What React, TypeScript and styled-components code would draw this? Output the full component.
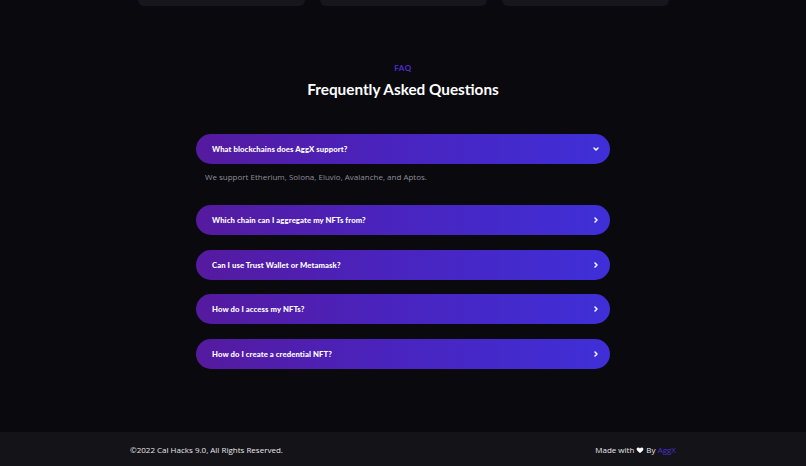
import React, { useState } from "react";
import styled, { createGlobalStyle } from "styled-components";

const Global = createGlobalStyle`
  html, body { margin: 0; padding: 0; background: #0a090e; }
  body { font-family: "Open Sans", "Liberation Sans", sans-serif; }
  * { box-sizing: border-box; }
`;

const Page = styled.div`
  width: 806px;
  height: 466px;
  display: flex;
  flex-direction: column;
  background: #0a090e;
  overflow: hidden;
`;

const CardRow = styled.div`
  display: flex;
  justify-content: center;
  gap: 15px;
`;

const CardStub = styled.div`
  width: 167px;
  height: 6px;
  background: #17161d;
  border-radius: 0 0 8px 8px;
`;

const Section = styled.section`
  flex: 1;
  display: flex;
  flex-direction: column;
  align-items: center;
  padding-top: 57px;
`;

const Eyebrow = styled.div`
  font-family: "Lato", sans-serif;
  font-weight: 700;
  font-size: 8px;
  letter-spacing: 0.6px;
  color: #4a2fd0;
  line-height: 10px;
`;

const Title = styled.h2`
  margin: 5px 0 0;
  font-family: "Lato", sans-serif;
  font-weight: 700;
  font-size: 15.3px;
  line-height: 22px;
  color: #ffffff;
`;

const List = styled.div`
  margin-top: 34px;
  width: 414px;
  display: flex;
  flex-direction: column;
  gap: 14.6px;
`;

const Item = styled.div`
  display: flex;
  flex-direction: column;
`;

const Question = styled.button`
  height: 30px;
  width: 100%;
  border: none;
  border-radius: 15px;
  padding: 0 10px 0 16px;
  display: flex;
  align-items: center;
  justify-content: space-between;
  background: linear-gradient(90deg, #551a9f 0%, #4a23bd 45%, #3f2fd8 100%);
  color: #ffffff;
  font-family: "Lato", sans-serif;
  font-weight: 900;
  font-size: 7.7px;
  letter-spacing: 0.1px;
  cursor: pointer;
  text-align: left;
`;

const Answer = styled.p`
  margin: 7px 0 7.4px 9px;
  font-family: "Open Sans", sans-serif;
  font-size: 8px;
  line-height: 12px;
  color: #8f8e96;
`;

const Footer = styled.footer`
  height: 34px;
  background: #141318;
  display: flex;
  justify-content: center;
`;

const FooterInner = styled.div`
  width: 546px;
  display: flex;
  align-items: center;
  justify-content: space-between;
  font-family: "Open Sans", sans-serif;
  font-size: 8px;
  color: #e6e6ea;
`;

const Brand = styled.span`
  color: #4a2fd0;
`;

const Heart = styled.svg`
  width: 8px;
  height: 8px;
  margin: 0 2px -1px;
`;

const Chevron = ({ open }: { open: boolean }) => (
  <svg width="8" height="8" viewBox="0 0 24 24" fill="none" stroke="#fff" strokeWidth="4.5" strokeLinecap="round" strokeLinejoin="round">
    {open ? <path d="M6 9l6 6 6-6" /> : <path d="M9 6l6 6-6 6" />}
  </svg>
);

const faqs = [
  { q: "What blockchains does AggX support?", a: "We support Etherium, Solona, Eluvio, Avalanche, and Aptos." },
  { q: "Which chain can I aggregate my NFTs from?", a: "" },
  { q: "Can I use Trust Wallet or Metamask?", a: "" },
  { q: "How do I access my NFTs?", a: "" },
  { q: "How do I create a credential NFT?", a: "" },
];

export default function App() {
  const [open, setOpen] = useState(0);
  return (
    <Page>
      <Global />
      <CardRow>
        <CardStub />
        <CardStub />
        <CardStub />
      </CardRow>
      <Section>
        <Eyebrow>FAQ</Eyebrow>
        <Title>Frequently Asked Questions</Title>
        <List>
          {faqs.map((f, i) => (
            <Item key={i}>
              <Question onClick={() => setOpen(open === i ? -1 : i)}>
                <span>{f.q}</span>
                <Chevron open={open === i} />
              </Question>
              {open === i && <Answer>{f.a}</Answer>}
            </Item>
          ))}
        </List>
      </Section>
      <Footer>
        <FooterInner>
          <span>©2022 Cal Hacks 9.0, All Rights Reserved.</span>
          <span>
            Made with
            <Heart viewBox="0 0 24 24">
              <path fill="#fff" d="M12 21s-7.5-4.6-9.6-9.1C.9 8.6 2.9 4.5 6.7 4.5c2.2 0 3.8 1.3 5.3 3.2 1.5-1.9 3.1-3.2 5.3-3.2 3.8 0 5.8 4.1 4.3 7.4C19.5 16.4 12 21 12 21z" />
            </Heart>
            By <Brand>AggX</Brand>
          </span>
        </FooterInner>
      </Footer>
    </Page>
  );
}
